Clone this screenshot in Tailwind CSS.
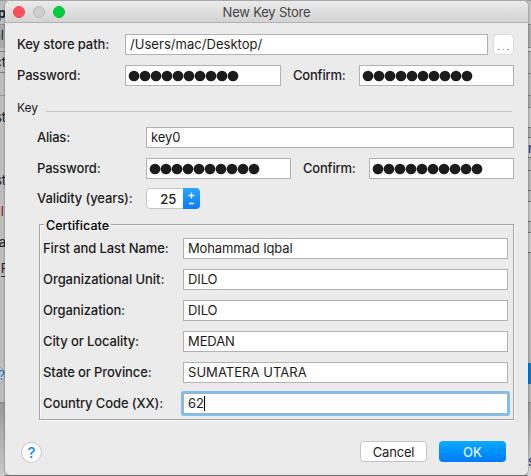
<!DOCTYPE html>
<html lang="en">
<head>
<meta charset="utf-8">
<title>New Key Store</title>
<script src="https://cdn.jsdelivr.net/npm/@tailwindcss/browser@4"></script>
</head>
<body class="relative h-[476px] w-[531px] overflow-hidden bg-[#c4c4c4] font-['Inter','Liberation_Sans',sans-serif] text-[13px] leading-[21px] text-[#1c1c1c]">
<!-- Window behind, left edge -->
<div class="absolute left-0 top-0 h-[476px] w-[6px] overflow-hidden bg-[#bdbdbd]">
  <div class="absolute top-0 h-px w-2 bg-[#999]"></div>
  <div class="absolute top-6 h-px w-2 bg-[#8f8f8f]"></div>
  <div class="absolute top-[25px] h-[23px] w-2 bg-[#a8a8a8]"></div>
  <div class="absolute top-[51px] h-[22px] w-2 border-y border-[#808080]"></div>
  <div class="absolute top-[95px] h-px w-2 bg-[#999]"></div>
  <div class="absolute right-0 top-[3px] font-bold">ap</div>
  <div class="absolute right-[2px] top-[25px]">nl</div>
  <div class="absolute right-0 top-[52px]">ct</div>
  <div class="absolute right-0 top-[107px]">st</div>
  <div class="absolute right-0 top-[170px]">st</div>
  <div class="absolute right-[2px] top-[201px] text-[#7c1518]">al</div>
  <div class="absolute right-0 top-[232px]">pa</div>
  <div class="absolute right-[-3px] top-[261px] border-b border-[#333] leading-[15px]">R</div>
  <div class="absolute right-px top-[365px] h-[21px] w-[21px] rounded-full border border-[#999] bg-[#ccc]"></div>
  <div class="absolute right-px top-[365px] text-[#1671c4]">?</div>
  <div class="absolute top-[402px] h-[74px] w-2 border-t border-[#888] bg-linear-to-b from-[#999] to-[#ccc]"></div>
</div>
<!-- Window behind, right edge -->
<div class="absolute right-0 top-0 h-[476px] w-[4px] overflow-hidden bg-[#b3b3b3]">
  <div class="absolute top-0 h-[24px] w-1 border-t border-[#999] bg-[#c4c4c4]"></div>
  <div class="absolute top-[24px] h-[24px] w-1 border-y border-[#888] bg-[#a9a9a9]"></div>
  <div class="absolute top-[48px] h-[3px] w-1 bg-[#d5d5d5]"></div>
  <div class="absolute top-[51px] h-[23px] w-1 border-y border-[#888]"></div>
  <div class="absolute top-[95px] h-[13px] w-1 border-y border-[#888] bg-[#aaa]"></div>
  <div class="absolute top-[108px] h-[20px] w-1 bg-[#c4c4c4]"></div>
  <div class="absolute top-[127px] h-[11px] w-1 border-y border-[#777] bg-[#aaa]"></div>
  <div class="absolute top-[138px] h-[20px] w-1 bg-[#c4c4c4]"></div>
  <div class="absolute right-0 top-[138px] w-[3px] overflow-hidden text-[#17286b]">n</div>
  <div class="absolute top-[157px] h-[14px] w-1 border-y border-[#777]"></div>
  <div class="absolute top-[190px] h-[12px] w-1 border-y border-[#777]"></div>
  <div class="absolute top-[202px] h-[19px] w-1 bg-[#c4c4c4]"></div>
  <div class="absolute top-[221px] h-[12px] w-1 border-y border-[#777]"></div>
  <div class="absolute top-[233px] h-[19px] w-1 bg-[#c4c4c4]"></div>
  <div class="absolute top-[252px] h-px w-1 bg-[#777]"></div>
  <div class="absolute top-[363px] h-[21px] w-1 bg-[#0c75c9]"></div>
  <div class="absolute top-[402px] h-[74px] w-1 border-t border-[#888] bg-linear-to-b from-[#999] to-[#d8d8d8]"></div>
  <div class="absolute right-0 top-[451px] w-[3px] overflow-hidden text-[#17286b]">s</div>
</div>
<div class="absolute left-1 top-[475px] h-px w-[524px] bg-[#808080]"></div>

<!-- Dialog -->
<main class="absolute left-[5px] top-px flex h-[474px] w-[523px] flex-col rounded-[5px] bg-[#ebebeb] shadow-[0_0_2px_rgba(0,0,0,0.55)]">
  <header class="relative flex h-[22px] shrink-0 items-center gap-2 rounded-t-[5px] border-b border-[#b1b1b1] bg-linear-to-b from-[#ebebeb] to-[#d3d3d3] pl-2">
    <i class="size-3 rounded-full border border-[#ee4650] bg-[#fc515b]"></i>
    <i class="size-3 rounded-full border border-[#bcbcbc] bg-[#cfcfcf]"></i>
    <i class="size-3 rounded-full border border-[#09bd31] bg-[#02cf38]"></i>
    <h1 class="absolute inset-x-0 top-px text-center tracking-[-0.2px] text-[#444]">New Key Store</h1>
  </header>

  <div class="flex h-[42px] shrink-0 pl-3 pt-[11px]">
    <label class="w-[108px] font-medium tracking-[-0.1px]">Key store path:</label>
    <div class="h-[21px] w-[363px] border border-[#b1b1b1] bg-white pl-1 leading-[19px] tracking-[0.04px]">/Users/mac/Desktop/</div>
    <button class="ml-[5px] flex h-[21px] w-[21px] items-end justify-center gap-[3px] rounded border border-[#dcdcdc] bg-[#fefefe] pb-1">
      <i class="size-[1.5px] bg-[#999]"></i><i class="size-[1.5px] bg-[#999]"></i><i class="size-[1.5px] bg-[#999]"></i>
    </button>
  </div>
  <div class="flex h-[31px] shrink-0 pl-3">
    <label class="w-[108px] font-medium tracking-[-0.15px]">Password:</label>
    <div class="flex h-[21px] w-[156px] items-center border border-[#b1b1b1] bg-white pl-[2px]">
      <svg class="h-[12px] w-[112px]" viewBox="-1 -1 112 12"><path d="M5 5h.01M16 5h.01M27 5h.01M38 5h.01M49 5h.01M60 5h.01M71 5h.01M82 5h.01M93 5h.01M104 5h.01" stroke="#1c1c1c" stroke-width="10.7" stroke-linecap="round"/></svg>
    </div>
    <label class="ml-3 w-[66px] font-medium tracking-[-0.2px]">Confirm:</label>
    <div class="flex h-[21px] w-[155px] items-center border border-[#b1b1b1] bg-white pl-[2px]">
      <svg class="h-[12px] w-[112px]" viewBox="-1 -1 112 12"><path d="M5 5h.01M16 5h.01M27 5h.01M38 5h.01M49 5h.01M60 5h.01M71 5h.01M82 5h.01M93 5h.01M104 5h.01" stroke="#1c1c1c" stroke-width="10.7" stroke-linecap="round"/></svg>
    </div>
  </div>
  <div class="flex h-[31px] shrink-0 pl-3 pt-px">
    <span class="w-[29px] text-[12px]">Key</span>
    <i class="mt-[14px] h-px w-[466px] bg-[#c8c8c8]"></i>
  </div>

  <div class="flex h-[31px] shrink-0 pl-8">
    <label class="w-[109px] font-medium tracking-[-0.2px]">Alias:</label>
    <div class="h-[21px] w-[368px] border border-[#b1b1b1] bg-white pl-1 leading-[19px] tracking-[-0.1px]">key0</div>
  </div>
  <div class="flex h-[30px] shrink-0 pl-8">
    <label class="w-[109px] font-medium tracking-[-0.15px]">Password:</label>
    <div class="flex h-[21px] w-[145px] items-center border border-[#b1b1b1] bg-white pl-[2px]">
      <svg class="h-[12px] w-[112px]" viewBox="-1 -1 112 12"><path d="M5 5h.01M16 5h.01M27 5h.01M38 5h.01M49 5h.01M60 5h.01M71 5h.01M82 5h.01M93 5h.01M104 5h.01" stroke="#1c1c1c" stroke-width="10.7" stroke-linecap="round"/></svg>
    </div>
    <label class="ml-3 w-[66px] font-medium tracking-[-0.2px]">Confirm:</label>
    <div class="flex h-[21px] w-[145px] items-center border border-[#b1b1b1] bg-white pl-[2px]">
      <svg class="h-[12px] w-[112px]" viewBox="-1 -1 112 12"><path d="M5 5h.01M16 5h.01M27 5h.01M38 5h.01M49 5h.01M60 5h.01M71 5h.01M82 5h.01M93 5h.01M104 5h.01" stroke="#1c1c1c" stroke-width="10.7" stroke-linecap="round"/></svg>
    </div>
  </div>
  <div class="flex h-9 shrink-0 pl-8">
    <label class="w-[109px] font-medium tracking-[-0.1px]">Validity (years):</label>
    <div class="flex h-[21px] w-[54px] overflow-hidden rounded">
      <span class="w-[37px] rounded-l border border-r-0 border-[#c4c4c4] bg-white pr-[7px] text-right font-medium leading-[20px] tracking-[-0.2px]">25</span>
      <svg class="w-[17px] bg-linear-to-b from-[#2ba5fb] to-[#0b7afc]" viewBox="0 0 17 21" fill="none" stroke="#fff" stroke-width="1.3"><path d="M5.5 7.5h6M8.5 4.5v6M6 15.5h5"/></svg>
    </div>
  </div>

  <section class="relative ml-[34px] h-[196px] w-[475px] shrink-0 border border-[#a5a5a5] pl-[3px] pt-[13px] shadow-[inset_1px_1px_0_#fafafa,1px_1px_0_#fafafa]">
    <h2 class="absolute left-[4px] top-[-10px] bg-[#ebebeb] px-[2px] text-[12.5px] font-medium leading-[21px] tracking-[0.02px] text-black">Certificate</h2>
    <div class="flex h-[31px]"><label class="w-[140px] font-medium tracking-[-0.1px]">First and Last Name:</label><div class="h-[21px] w-[325px] border border-[#b1b1b1] bg-white pl-1 leading-[19px] tracking-[-0.12px]">Mohammad Iqbal</div></div>
    <div class="flex h-[31px]"><label class="w-[140px] font-medium tracking-[-0.06px]">Organizational Unit:</label><div class="h-[21px] w-[325px] border border-[#b1b1b1] bg-white pl-1 leading-[19px] tracking-[-0.1px]">DILO</div></div>
    <div class="flex h-[31px]"><label class="w-[140px] font-medium tracking-[-0.1px]">Organization:</label><div class="h-[21px] w-[325px] border border-[#b1b1b1] bg-white pl-1 leading-[19px] tracking-[-0.1px]">DILO</div></div>
    <div class="flex h-[31px]"><label class="w-[140px] font-medium tracking-[-0.1px]">City or Locality:</label><div class="h-[21px] w-[325px] border border-[#b1b1b1] bg-white pl-1 leading-[19px] tracking-[-0.1px]">MEDAN</div></div>
    <div class="flex h-[31px]"><label class="w-[140px] font-medium tracking-[-0.1px]">State or Province:</label><div class="h-[21px] w-[325px] border border-[#b1b1b1] bg-white pl-1 leading-[19px] tracking-[0.04px]">SUMATERA UTARA</div></div>
    <div class="flex h-[31px]"><label class="w-[140px] font-medium tracking-[-0.1px]">Country Code (XX):</label><div class="flex h-[21px] w-[325px] items-center rounded-[1px] border border-[#9fb3c3] bg-white pl-1 leading-[19px] tracking-[-0.1px] ring-2 ring-[#7dbfee]">62<i class="h-[15px] w-px bg-black"></i></div></div>
  </section>

  <footer class="flex items-start pl-4 pt-[21px]">
    <button class="mt-px h-[21px] w-[21px] rounded-full border border-[#c6c6c6] bg-white text-center text-[15px] font-medium leading-[19px] text-[#0b87f5]">?</button>
    <button class="ml-[318px] h-[21px] w-[67px] rounded border border-[#c4c4c4] bg-white text-center leading-[21px] tracking-[-0.2px]">Cancel</button>
    <button class="ml-3 h-[21px] w-[67px] rounded bg-linear-to-b from-[#11a9fb] to-[#007afc] text-center font-medium leading-[22px] text-[#e4f2ff]">OK</button>
  </footer>
</main>
</body>
</html>
